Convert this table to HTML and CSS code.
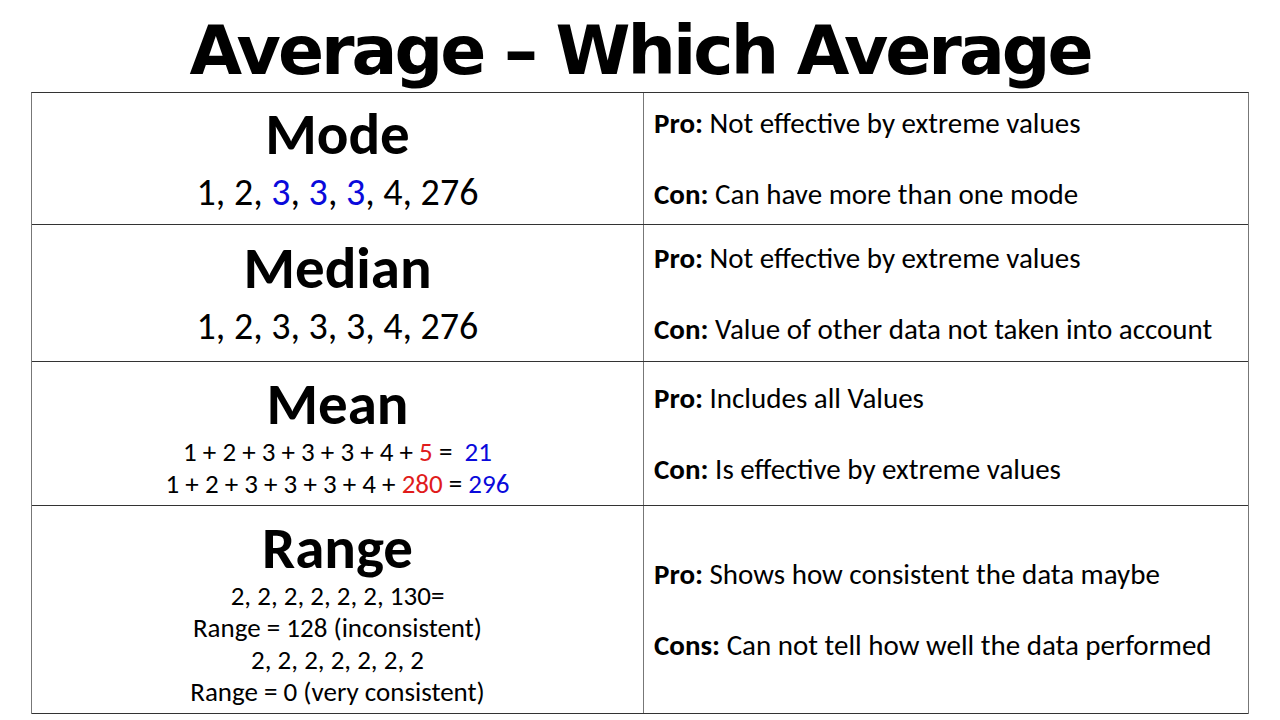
FILE: index.html
```html
<!DOCTYPE html>
<html lang="en">
<head>
<meta charset="utf-8">
<title>Average - Which Average</title>
<link rel="stylesheet" href="styles.css">
</head>
<body>
<div class="page">
  <h1 class="title">Average – Which Average</h1>
  <div class="table">
    <div class="row row-mode">
      <div class="cell left">
        <div class="head">Mode</div>
        <div class="big">1, 2, <span class="blue">3</span>, <span class="blue">3</span>, <span class="blue">3</span>, 4, 276</div>
      </div>
      <div class="cell right">
        <p class="line"><b>Pro:</b> Not effective by extreme values</p>
        <p class="line"><b>Con:</b> Can have more than one mode</p>
      </div>
    </div>
    <div class="row row-median">
      <div class="cell left">
        <div class="head">Median</div>
        <div class="big">1, 2, 3, 3, 3, 4, 276</div>
      </div>
      <div class="cell right">
        <p class="line"><b>Pro:</b> Not effective by extreme values</p>
        <p class="line"><b>Con:</b> Value of other data not taken into account</p>
      </div>
    </div>
    <div class="row row-mean">
      <div class="cell left">
        <div class="head">Mean</div>
        <div class="small first">1 + 2 + 3 + 3 + 3 + 4 + <span class="red">5</span> = &nbsp;<span class="blue">21</span></div>
        <div class="small">1 + 2 + 3 + 3 + 3 + 4 + <span class="red">280</span> = <span class="blue">296</span></div>
      </div>
      <div class="cell right">
        <p class="line"><b>Pro:</b> Includes all Values</p>
        <p class="line"><b>Con:</b> Is effective by extreme values</p>
      </div>
    </div>
    <div class="row row-range">
      <div class="cell left">
        <div class="head">Range</div>
        <div class="small first">2, 2, 2, 2, 2, 2, 130=</div>
        <div class="small">Range = 128 (inconsistent)</div>
        <div class="small">2, 2, 2, 2, 2, 2, 2</div>
        <div class="small">Range = 0 (very consistent)</div>
      </div>
      <div class="cell right">
        <p class="line"><b>Pro:</b> Shows how consistent the data maybe</p>
        <p class="line"><b>Cons:</b> Can not tell how well the data performed</p>
      </div>
    </div>
  </div>
</div>
</body>
</html>
```

FILE: styles.css
```css
html, body {
  margin: 0;
  padding: 0;
  background: #ffffff;
}
.page {
  width: 1280px;
  height: 720px;
  overflow: hidden;
  color: #000;
  font-family: Carlito, Lato, "Liberation Sans", sans-serif;
}
.title {
  margin: 0;
  height: 92px;
  box-sizing: border-box;
  padding-top: 9px;
  text-align: center;
  font-family: "Comic Sans MS", "DejaVu Sans", sans-serif;
  font-weight: bold;
  font-size: 68px;
  line-height: 83px;
  letter-spacing: -3px;
  white-space: nowrap;
}
.table {
  margin-left: 31px;
  width: 1218px;
  border-top: 1px solid #333;
  border-left: 1px solid #777;
  border-right: 1px solid #777;
  box-sizing: border-box;
}
.row {
  display: flex;
  border-bottom: 1px solid #333;
  box-sizing: border-box;
}
.row-mode { height: 132px; }
.row-median { height: 137px; }
.row-mean { height: 144px; }
.row-range { height: 208px; }
.cell {
  display: flex;
  flex-direction: column;
  justify-content: center;
  box-sizing: border-box;
}
.left {
  width: 612px;
  padding-top: 6px;
  border-right: 1px solid #777;
  align-items: center;
  text-align: center;
}
.right {
  flex: 1;
  padding-left: 10px;
  gap: 35px;
}
.head {
  font-weight: bold;
  font-size: 59px;
  line-height: 60px;
}
.big {
  font-size: 38px;
  line-height: 56px;
  white-space: nowrap;
}
.small {
  font-size: 27px;
  line-height: 32px;
  white-space: nowrap;
}
.small.first {
  margin-top: 2px;
}
.line {
  margin: 0;
  font-size: 29px;
  line-height: 36px;
  white-space: nowrap;
}
.line b { font-weight: bold; }
.blue { color: #0a0adb; }
.red { color: #e01b1b; }
```
